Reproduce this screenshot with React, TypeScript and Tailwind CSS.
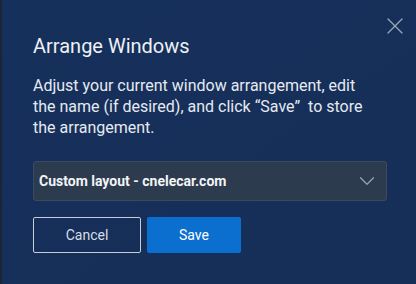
import { ChevronDown, X } from 'lucide-react';

export default function App() {
    return (
        <div className="w-[416px] h-[284px] relative overflow-hidden flex bg-gradient-to-br from-[#16305c] to-[#152f58] font-['Roboto',sans-serif]">
            {/* dark edge of the window behind */}
            <div className="w-[2px] bg-[#1b2537]" />

            <div className="flex-1 pl-[31px] pt-[34px] flex flex-col">
                <h2 className="text-[20px] leading-[24px] text-[#eef1f5]">Arrange Windows</h2>
                <p className="mt-[17px] w-[342px] text-[16px] leading-[21px] text-[#e6eaf0]">
                    Adjust your current window arrangement, edit the name (if desired), and click “Save”{'\u00a0'} to store the arrangement.
                </p>

                <div className="mt-[23px] w-[354px] h-[40px] flex items-center justify-between pl-[5px] pr-[6px] bg-[#2c3b4e] border border-[#3c4a5e] rounded-[3px]">
                    <span className="text-[14px] font-bold text-[#f2f4f7]">Custom layout - cnelecar.com</span>
                    <ChevronDown size={26} strokeWidth={1.1} className="text-[#9aa4b2]" />
                </div>

                <div className="mt-[16px] flex gap-[6px]">
                    <button className="w-[108px] h-[36px] rounded-[2px] border border-[#c9ced6] text-[14px] text-[#d8dde5]">
                        Cancel
                    </button>
                    <button className="w-[94px] h-[36px] rounded-[2px] bg-[#0b6fd0] text-[14px] text-white">
                        Save
                    </button>
                </div>
            </div>

            <button className="absolute top-[12px] right-[7px] text-[#9ca7b8]">
                <X size={28} strokeWidth={1.1} />
            </button>
        </div>
    );
}
